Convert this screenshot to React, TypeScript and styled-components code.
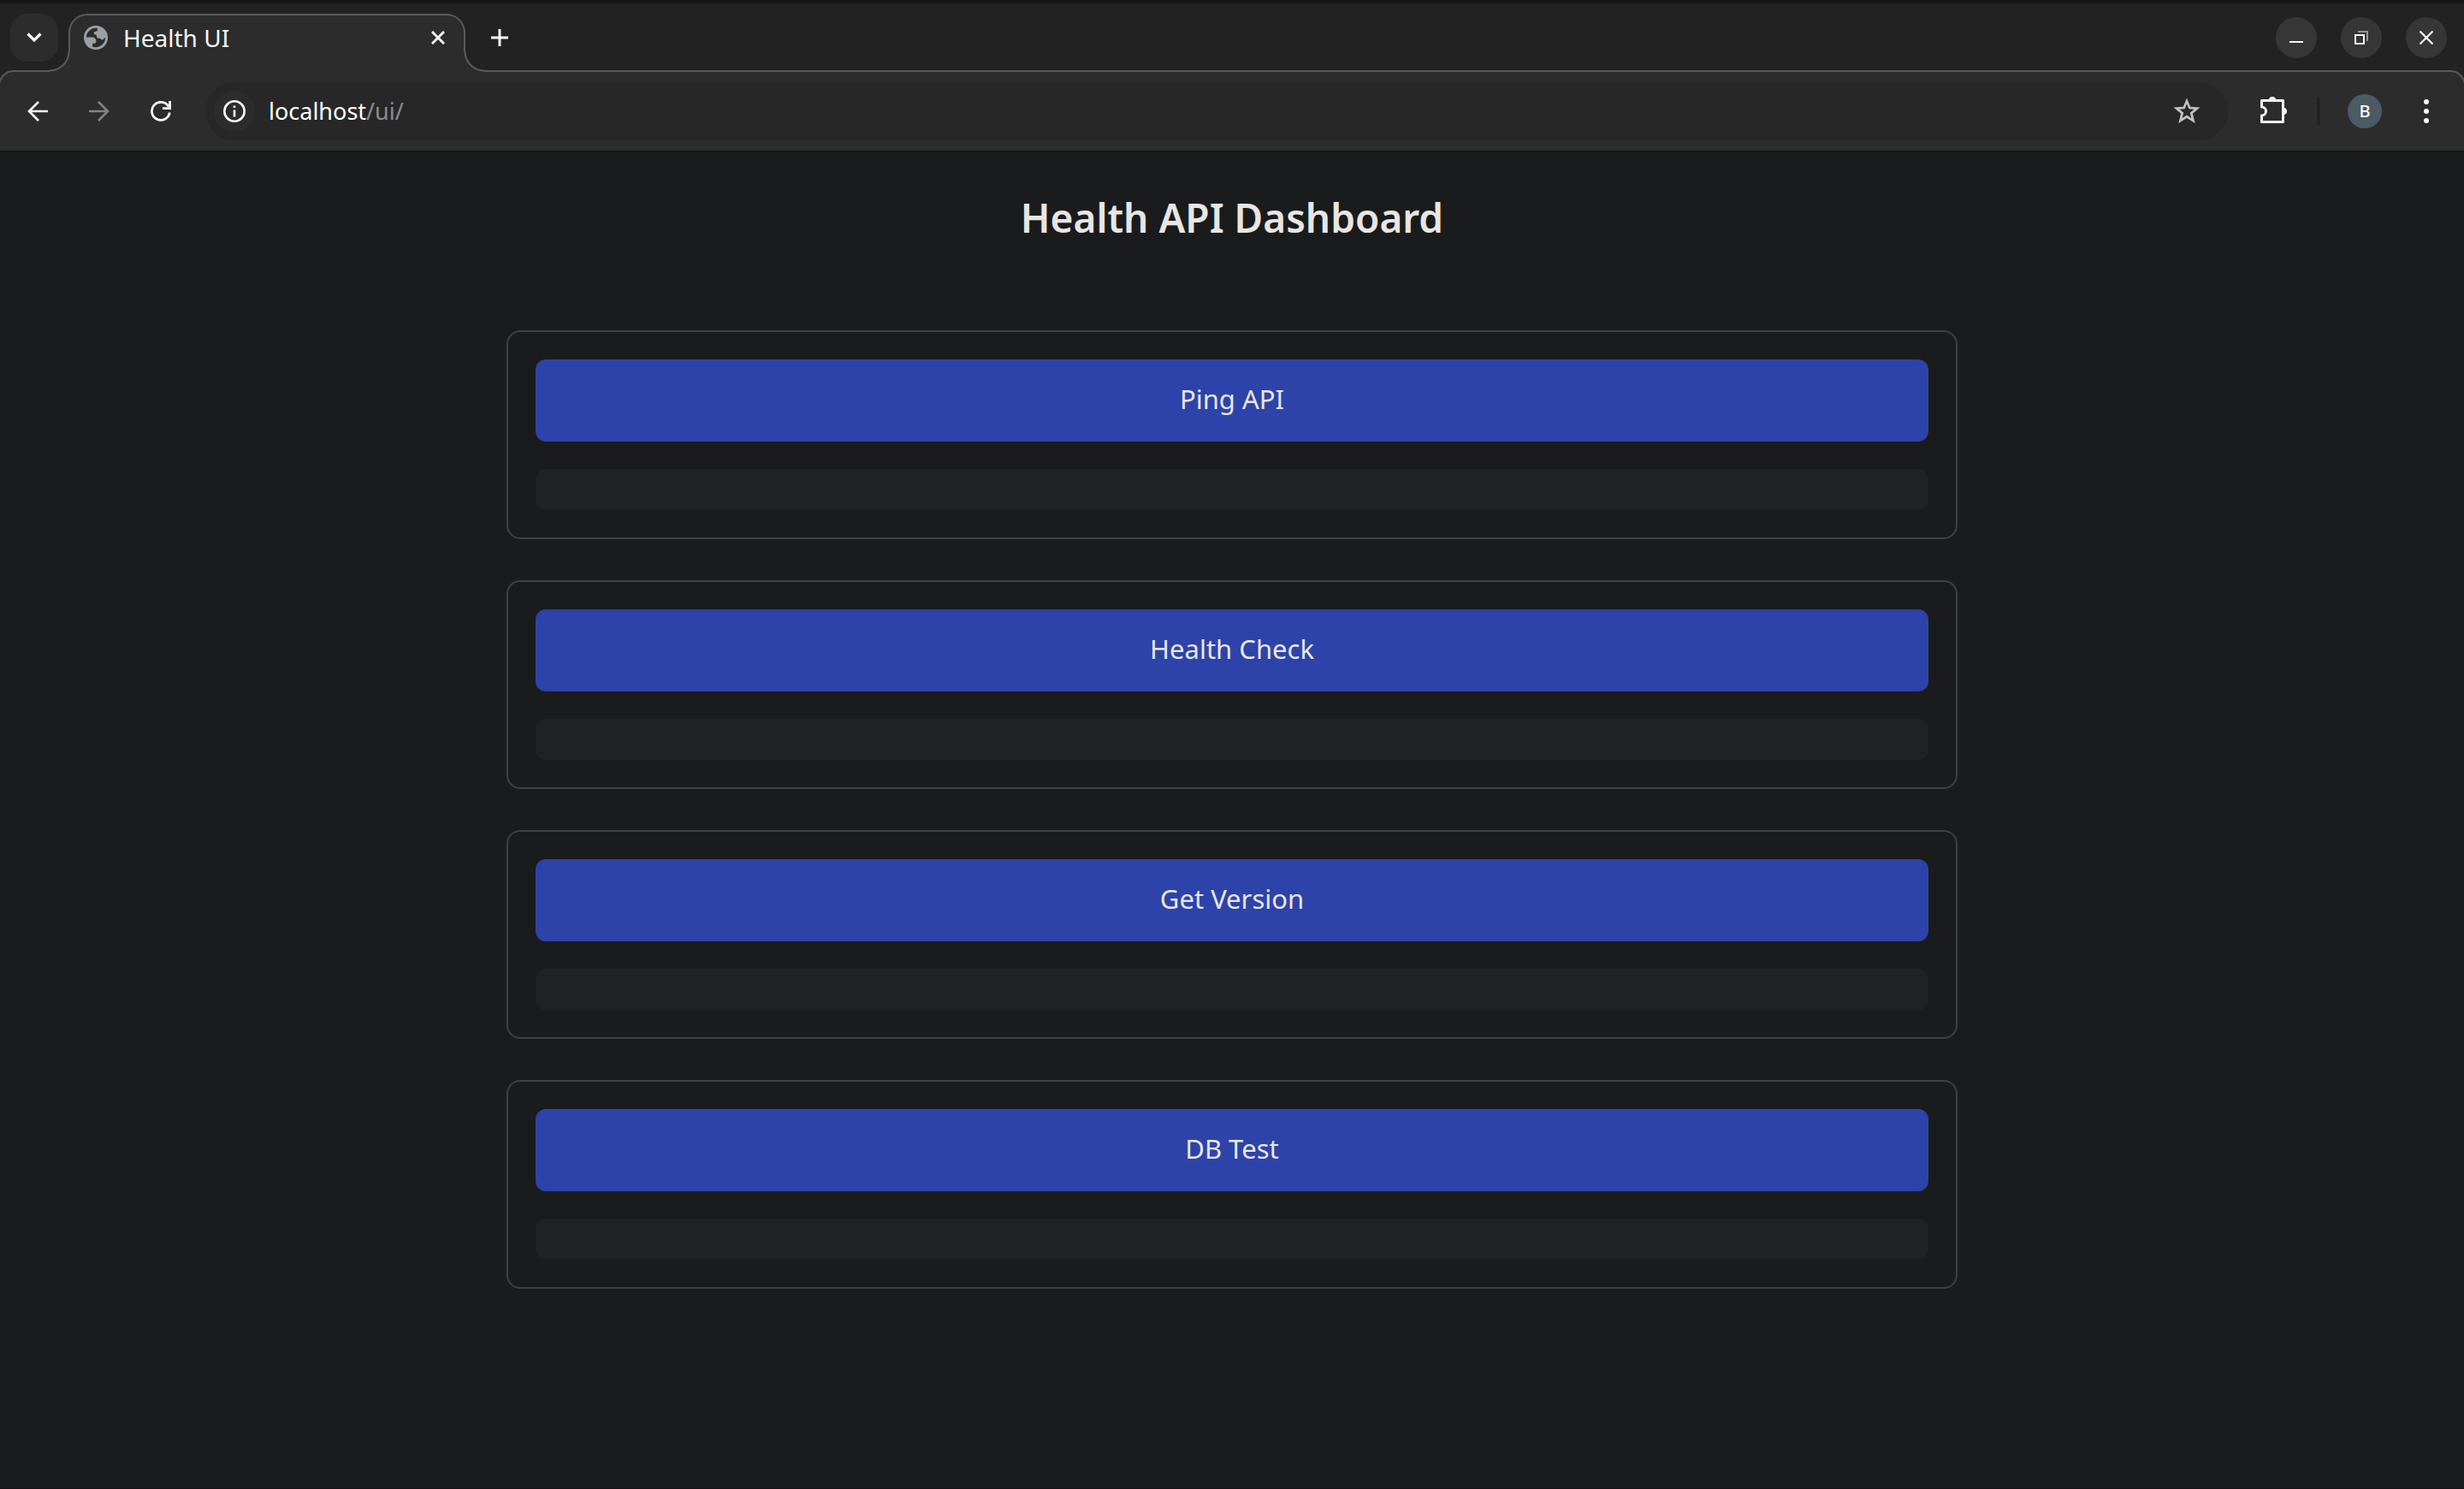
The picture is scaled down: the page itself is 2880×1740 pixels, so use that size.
import React from "react";
import styled, { createGlobalStyle } from "styled-components";

const GlobalStyle = createGlobalStyle`
  *, *::before, *::after { box-sizing: border-box; }
  html, body { margin: 0; background: #1a1b1c; }
  body, button, input { font-family: "Noto Sans", "Open Sans", sans-serif; }
`;

const Window = styled.div`
  display: flex;
  flex-direction: column;
  min-height: 100vh;
  overflow: hidden;
  border-top: 4px solid #141414;
  border-bottom: 1px solid #161114;
  background: #222222;
`;

const TabStrip = styled.header`
  display: flex;
  align-items: flex-start;
  height: 78px;
  padding: 12px 20px 0 12px;
`;

const IconButton = styled.button<{ $size: number; $color?: string }>`
  display: flex;
  flex: none;
  align-items: center;
  justify-content: center;
  width: ${(p) => p.$size}px;
  height: ${(p) => p.$size}px;
  padding: 0;
  border: 0;
  border-radius: 50%;
  background: none;
  color: ${(p) => p.$color ?? "#f8f8f8"};
  cursor: pointer;
`;

const TabSearchButton = styled(IconButton)`
  border-radius: 20px;
  background: #2c2c2c;
`;

const Tab = styled.div`
  position: relative;
  z-index: 1;
  display: flex;
  align-items: center;
  width: 464px;
  height: 68px;
  margin-left: 12px;
  padding: 0 14px 14px 16px;
  border: 2px solid #5a5a5a;
  border-bottom: 0;
  border-radius: 22px 22px 0 0;
  background: #2c2c2c;

  &::before,
  &::after {
    content: "";
    position: absolute;
    bottom: 0;
    width: 24px;
    height: 24px;
  }

  &::before {
    left: -24px;
    background: radial-gradient(circle at 0 0, transparent 21px, #5a5a5a 22px, #5a5a5a 23px, #2c2c2c 24px);
  }

  &::after {
    right: -24px;
    background: radial-gradient(circle at 100% 0, transparent 21px, #5a5a5a 22px, #5a5a5a 23px, #2c2c2c 24px);
  }
`;

const TabTitle = styled.span`
  flex: 1;
  margin-left: 18px;
  color: #f8f8f8;
  font-size: 28px;
  line-height: 40px;
`;

const NewTabButton = styled(IconButton)`
  margin-left: 12px;
`;

const WindowControls = styled.div`
  display: flex;
  gap: 28px;
  margin: 4px 0 0 auto;
`;

const WindowButton = styled(IconButton)`
  background: #363636;
`;

const Toolbar = styled.div`
  display: flex;
  align-items: center;
  height: 96px;
  margin: 0 -2px;
  padding: 0 20px;
  border: 2px solid #5a5a5a;
  border-bottom: 2px solid #141517;
  border-radius: 18px 18px 0 0;
  background: #2c2c2c;
`;

const Navigation = styled.nav`
  display: flex;
  gap: 24px;
  margin-right: 28px;
`;

const AddressBar = styled.form`
  display: flex;
  flex: 1;
  align-items: center;
  height: 68px;
  padding: 0 24px 0 10px;
  border-radius: 34px;
  background: #272727;
`;

const SiteInfoButton = styled(IconButton)`
  background: #2c2c2c;
`;

const Address = styled.a`
  flex: 1;
  margin-left: 16px;
  color: #8d8d8d;
  font-size: 27px;
  line-height: 40px;
  text-decoration: none;
`;

const Host = styled.span`
  color: #ffffff;
`;

const ToolbarActions = styled.div`
  display: flex;
  align-items: center;
  margin-left: 30px;
`;

const Divider = styled.span`
  width: 4px;
  height: 32px;
  margin: 0 32px 0 26px;
  border-radius: 2px;
  background: #222222;
`;

const Avatar = styled(IconButton)`
  margin-right: 28px;
  background: #4b5a64;
  font-size: 20px;
  font-weight: 500;
  line-height: 40px;
`;

const Page = styled.main`
  flex: 1;
  padding: 44px 32px;
  background: #1a1b1c;
`;

const Title = styled.h1`
  margin: 0 0 100px;
  color: #e8e6e3;
  font-size: 46px;
  font-weight: 600;
  line-height: 64px;
  text-align: center;
`;

const CardList = styled.div`
  display: grid;
  gap: 48px;
  max-width: 1696px;
  margin: 0 auto;
`;

const Card = styled.section`
  display: grid;
  gap: 32px;
  padding: 32px;
  border: 2px solid #3e4042;
  border-radius: 16px;
`;

const ActionButton = styled.button`
  height: 96px;
  padding: 0 32px 4px;
  border: 0;
  border-radius: 12px;
  background: #2d43a9;
  color: #e8e6e3;
  font-size: 31px;
  line-height: 48px;
  cursor: pointer;
`;

const Result = styled.pre`
  min-height: 48px;
  margin: 0;
  padding: 24px;
  border-radius: 12px;
  background: #202122;
`;

const stroke = { fill: "none", stroke: "currentColor" };

const ACTIONS = ["Ping API", "Health Check", "Get Version", "DB Test"];

export default function App() {
  return (
    <Window>
      <GlobalStyle />
      <TabStrip>
        <TabSearchButton $size={56} aria-label="Search tabs">
          <svg width="18" height="12" viewBox="0 0 18 12" {...stroke} strokeWidth="3.2">
            <path d="M1.5 1.5 9 9l7.500-7.500" />
          </svg>
        </TabSearchButton>
        <Tab>
          <svg width="28" height="28" viewBox="0 0 28 28">
            <circle cx="14" cy="14" r="14" fill="#9aa0a6" />
            <path
              fill="#2c2c2c"
              d="M2.800 13.500A11.200 11.200 0 0 1 16 3v1.300c0 1.500-1.200 2.700-2.700 2.700-1 0-1.500.6-1.500 1.500 0 1.400.7 2.200 2 2.200h1.200v2c0 1.200.8 2 2 2h1.200c1.300 0 2 .8 2.600 1.900 1.400-.1 2.400-.8 2.800-2.200l1.600-.3A11.200 11.200 0 0 1 10 24.400v-2c0-1 .6-1.600 1.600-1.600 1.700 0 2.800-1 2.800-2.600 0-2.800-1.800-4.700-4.800-4.700z"
            />
          </svg>
          <TabTitle>Health UI</TabTitle>
          <IconButton $size={32} aria-label="Close tab">
            <svg width="16" height="16" viewBox="0 0 16 16" {...stroke} strokeWidth="3">
              <path d="m1 1 14 14M15 1 1 15" />
            </svg>
          </IconButton>
        </Tab>
        <NewTabButton $size={56} aria-label="New tab">
          <svg width="20" height="20" viewBox="0 0 20 20" {...stroke} strokeWidth="3">
            <path d="M10 0v20M0 10h20" />
          </svg>
        </NewTabButton>
        <WindowControls>
          <WindowButton $size={48} aria-label="Minimize">
            <svg width="16" height="16" viewBox="0 0 16 16" fill="currentColor">
              <path d="M0 12h16v2H0z" />
            </svg>
          </WindowButton>
          <WindowButton $size={48} aria-label="Restore">
            <svg width="16" height="16" viewBox="0 0 16 16" {...stroke} strokeWidth="2">
              <path d="M4 1h11v11" stroke="#969696" />
              <path d="M1 5h10v10H1z" />
            </svg>
          </WindowButton>
          <WindowButton $size={48} aria-label="Close">
            <svg width="16" height="16" viewBox="0 0 16 16" {...stroke} strokeWidth="2.2">
              <path d="m.5.5 15 15M15.500.5l-15 15" />
            </svg>
          </WindowButton>
        </WindowControls>
      </TabStrip>

      <Toolbar>
        <Navigation>
          <IconButton $size={48} aria-label="Back">
            <svg width="24" height="24" viewBox="0 0 24 24" {...stroke} strokeWidth="2.600">
              <path d="M24 12H2M13 1 2 12l11 11" />
            </svg>
          </IconButton>
          <IconButton $size={48} $color="#838383" aria-label="Forward">
            <svg width="24" height="24" viewBox="0 0 24 24" {...stroke} strokeWidth="2.600">
              <path d="M0 12h22M11 1l11 11-11 11" />
            </svg>
          </IconButton>
          <IconButton $size={48} aria-label="Reload">
            <svg width="24" height="24" viewBox="0 0 24 24" {...stroke} strokeWidth="2.800">
              <path d="M22.300 13.500A10.500 10.500 0 1 1 21 6.500M22.600 0v8.600H14" />
            </svg>
          </IconButton>
        </Navigation>
        <AddressBar onSubmit={(e) => e.preventDefault()}>
          <SiteInfoButton $size={48} type="button" aria-label="Site information">
            <svg width="26" height="26" viewBox="0 0 26 26" {...stroke} strokeWidth="2.600">
              <circle cx="13" cy="13" r="11.700" />
              <path d="M13 11.500V19.500M13 6.500v2.600" />
            </svg>
          </SiteInfoButton>
          <Address href="#">
            <Host>localhost</Host>/ui/
          </Address>
          <IconButton $size={48} $color="#c0c0c0" type="button" aria-label="Bookmark this page">
            <svg width="32" height="32" viewBox="0 0 32 32">
              <path
                fill="currentColor"
                fillRule="evenodd"
                d="m16 .5 4.200 10.200 11.300.9-8.600 7.200 2.800 11.200L16 24l-9.700 6 2.800-11.200L.5 11.600l11.300-.9zM16 7.600l-2.300 5.700-6.200.5 4.800 4-1.600 6.100 5.300-3.300 5.300 3.300-1.600-6.100 4.800-4-6.200-.5z"
              />
            </svg>
          </IconButton>
        </AddressBar>
        <ToolbarActions>
          <IconButton $size={48} aria-label="Extensions">
            <svg width="34" height="34" viewBox="0 0 34 34">
              <path
                fill="none"
                stroke="currentColor"
                strokeWidth="3"
                strokeLinejoin="round"
                d="M2.500 4.500h25v25h-25v-7.500a5 5 0 0 0 0-10z"
              />
              <path fill="currentColor" d="M11 4a4 4 0 0 1 8 0zM28 13a4 4 0 0 1 0 8z" />
            </svg>
          </IconButton>
          <Divider />
          <Avatar $size={40} aria-label="Profile">
            B
          </Avatar>
          <IconButton $size={48} aria-label="Menu">
            <svg width="6" height="28" viewBox="0 0 6 28" fill="currentColor">
              <circle cx="3" cy="3" r="3" />
              <circle cx="3" cy="14" r="3" />
              <circle cx="3" cy="25" r="3" />
            </svg>
          </IconButton>
        </ToolbarActions>
      </Toolbar>

      <Page>
        <Title>Health API Dashboard</Title>
        <CardList>
          {ACTIONS.map((label) => (
            <Card key={label}>
              <ActionButton type="button">{label}</ActionButton>
              <Result />
            </Card>
          ))}
        </CardList>
      </Page>
    </Window>
  );
}
